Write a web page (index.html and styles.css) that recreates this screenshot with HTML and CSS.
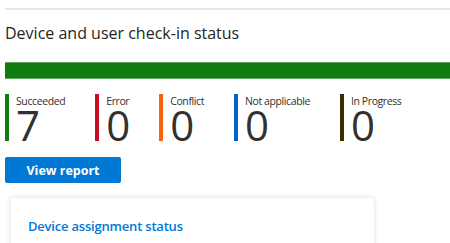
FILE: index.html
```
<!DOCTYPE html>
<html lang="en">
<head>
    <meta charset="UTF-8">
    <meta name="viewport" content="width=device-width, initial-scale=1.0">
    <title>Check-in status</title>
    <link rel="stylesheet" href="styles.css">
</head>
<body>
    <div class="panel">
        <h2 class="title">Device and user check-in status</h2>

        <!-- Bar chart: all devices succeeded -->
        <div class="chart">
            <div class="chart-fill succeeded" style="width: 100%"></div>
        </div>

        <div class="stats">
            <div class="stat succeeded">
                <div class="stat-label">Succeeded</div>
                <div class="stat-value">7</div>
            </div>
            <div class="stat error">
                <div class="stat-label">Error</div>
                <div class="stat-value">0</div>
            </div>
            <div class="stat conflict">
                <div class="stat-label">Conflict</div>
                <div class="stat-value">0</div>
            </div>
            <div class="stat not-applicable">
                <div class="stat-label">Not applicable</div>
                <div class="stat-value">0</div>
            </div>
            <div class="stat in-progress">
                <div class="stat-label">In Progress</div>
                <div class="stat-value">0</div>
            </div>
        </div>

        <button class="report-btn">View report</button>
    </div>

    <div class="card">
        <h3 class="card-title">Device assignment status</h3>
    </div>
</body>
</html>
```

FILE: styles.css
```
body {
    margin: 0;
    padding: 8px 0 0 5px;
    font-family: "Open Sans", "Noto Sans", sans-serif;
    color: #323130;
    background: #fff;
    overflow: hidden;
}

.panel {
    border-top: 2px solid #e6e6e6;
}

.title {
    margin: 11px 0 0 0;
    font-size: 16px;
    font-weight: 400;
    line-height: 24px;
    color: #252423;
}

/* Bar chart */
.chart {
    margin-top: 17px;
    height: 17px;
    background: #e1e1e1;
}

.chart-fill {
    height: 100%;
}

.chart-fill.succeeded {
    background: #107c10;
    border-top: 1px solid #5fa35f;
    border-bottom: 1px solid #5fa35f;
    box-sizing: border-box;
}

/* Status counters */
.stats {
    display: flex;
    margin-top: 15px;
}

.stat {
    border-left: 4px solid #107c10;
    padding-left: 7px;
    margin-right: 30px;
    height: 47px;
    white-space: nowrap;
}

.stat.error { border-color: #c50f1f; }
.stat.conflict { border-color: #f7630c; }
.stat.not-applicable { border-color: #0063d1; }
.stat.in-progress { border-color: #3d2e00; }

.stat-label {
    font-size: 10.5px;
    line-height: 14px;
    letter-spacing: -0.4px;
}

.stat-value {
    margin-top: 2px;
    font-size: 42px;
    line-height: 30px;
    font-weight: 400;
    letter-spacing: -1px;
}

.report-btn {
    display: block;
    margin-top: 16px;
    width: 116px;
    height: 26px;
    border: none;
    border-radius: 2px;
    background: #0078d4;
    color: #fff;
    font-family: inherit;
    font-size: 12.5px;
    font-weight: 700;
    cursor: pointer;
}

/* Card below */
.card {
    margin: 15px 0 0 6px;
    width: 363px;
    height: 80px;
    background: #fff;
    box-shadow: 0 0 6px rgba(0, 0, 0, 0.14);
    padding: 19px 17px;
    box-sizing: border-box;
}

.card-title {
    margin: 0;
    font-size: 13px;
    font-weight: 600;
    letter-spacing: -0.2px;
    color: #0078d4;
}
```
